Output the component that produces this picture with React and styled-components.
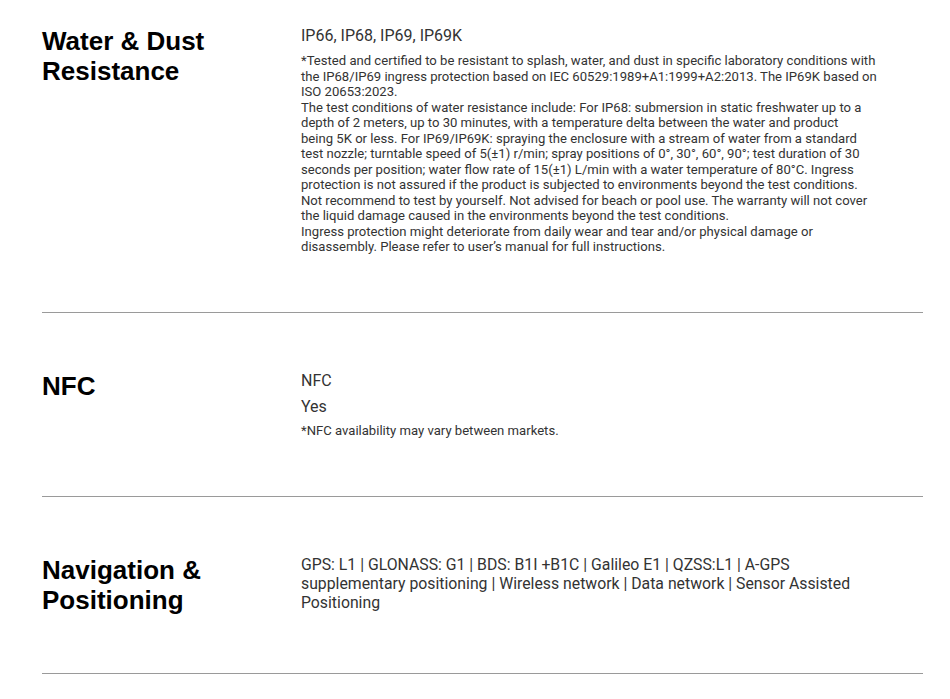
import React from "react";
import styled, { createGlobalStyle } from "styled-components";

const GlobalStyle = createGlobalStyle`
    body {
        margin: 0;
        background: #fff;
        font-family: "Roboto", "Liberation Sans", sans-serif;
        color: #333;
    }
`;

const Page = styled.div`
    width: 881px;
    margin-left: 42px;
`;

const Section = styled.section`
    display: grid;
    grid-template-columns: 259px 600px;
    align-items: start;
    padding: ${props => props.first ? '26px' : '58px'} 0 ${props => props.bottom || 58}px;
    border-bottom: 1px solid #9a9a9a;
`;

const Heading = styled.h2`
    margin: 0;
    font-family: "Liberation Sans", sans-serif;
    font-size: 26px;
    line-height: 30px;
    font-weight: 700;
    color: #000;
`;

const Body = styled.div`
    display: flex;
    flex-direction: column;
    gap: ${props => props.gap || 0}px;
`;

const Value = styled.p`
    margin: 0;
    font-size: ${props => props.size || 16}px;
    line-height: 19px;
    color: #333;
`;

const Note = styled.p`
    margin: 0;
    font-size: 13.1px;
    line-height: 15.5px;
    color: #333;
`;

const Line = styled.span`
    display: block;
    white-space: nowrap;
`;

// each string is one printed line, so wrapping stays like the original
const Lines = ({ as: Tag, lines, ...rest }) => (
    <Tag {...rest}>
        {lines.map((l, i) => <Line key={i}>{l}</Line>)}
    </Tag>
);

const water = [
    "*Tested and certified to be resistant to splash, water, and dust in specific laboratory conditions with",
    "the IP68/IP69 ingress protection based on IEC 60529:1989+A1:1999+A2:2013. The IP69K based on",
    "ISO 20653:2023.",
    "The test conditions of water resistance include: For IP68: submersion in static freshwater up to a",
    "depth of 2 meters, up to 30 minutes, with a temperature delta between the water and product",
    "being 5K or less. For IP69/IP69K: spraying the enclosure with a stream of water from a standard",
    "test nozzle; turntable speed of 5(±1) r/min; spray positions of 0°, 30°, 60°, 90°; test duration of 30",
    "seconds per position; water flow rate of 15(±1) L/min with a water temperature of 80°C. Ingress",
    "protection is not assured if the product is subjected to environments beyond the test conditions.",
    "Not recommend to test by yourself. Not advised for beach or pool use. The warranty will not cover",
    "the liquid damage caused in the environments beyond the test conditions.",
    "Ingress protection might deteriorate from daily wear and tear and/or physical damage or",
    "disassembly. Please refer to user’s manual for full instructions.",
];

const navigation = [
    "GPS: L1 | GLONASS: G1 | BDS: B1I +B1C | Galileo E1 | QZSS:L1 | A-GPS",
    "supplementary positioning | Wireless network | Data network | Sensor Assisted",
    "Positioning",
];

export default function App() {
    return (
        <Page>
            <GlobalStyle />
            <Section first bottom={57}>
                <Heading>Water &amp; Dust<br />Resistance</Heading>
                <Body gap={8}>
                    <Value>IP66, IP68, IP69, IP69K</Value>
                    <Lines as={Note} lines={water} />
                </Body>
            </Section>
            <Section>
                <Heading>NFC</Heading>
                <Body gap={7}>
                    <Value>NFC</Value>
                    <Value>Yes</Value>
                    <Note>*NFC availability may vary between markets.</Note>
                </Body>
            </Section>
            <Section>
                <Heading>Navigation &amp;<br />Positioning</Heading>
                <Body>
                    <Lines as={Value} size={15.8} lines={navigation} />
                </Body>
            </Section>
        </Page>
    );
}
